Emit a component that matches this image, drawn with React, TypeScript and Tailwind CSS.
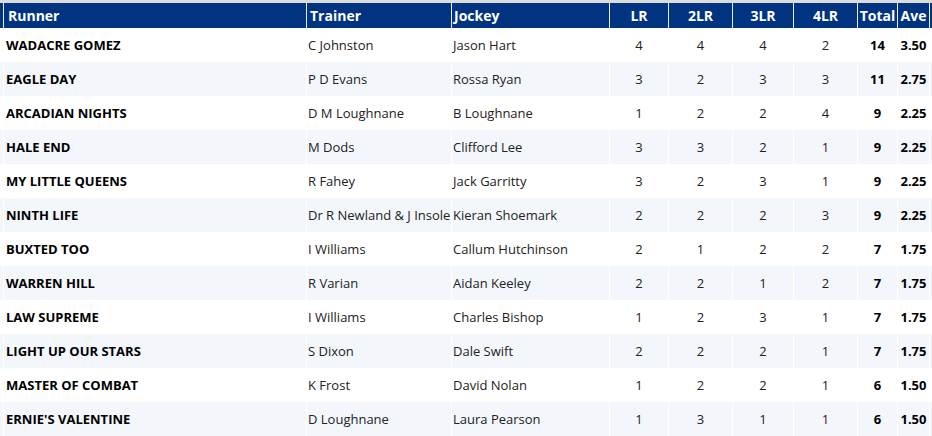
import React from "react";

type Row = { runner: string; trainer: string; jockey: string; lr: number; l2: number; l3: number; l4: number; total: number; ave: string };

const rows: Row[] = [
  { runner: "WADACRE GOMEZ", trainer: "C Johnston", jockey: "Jason Hart", lr: 4, l2: 4, l3: 4, l4: 2, total: 14, ave: "3.50" },
  { runner: "EAGLE DAY", trainer: "P D Evans", jockey: "Rossa Ryan", lr: 3, l2: 2, l3: 3, l4: 3, total: 11, ave: "2.75" },
  { runner: "ARCADIAN NIGHTS", trainer: "D M Loughnane", jockey: "B Loughnane", lr: 1, l2: 2, l3: 2, l4: 4, total: 9, ave: "2.25" },
  { runner: "HALE END", trainer: "M Dods", jockey: "Clifford Lee", lr: 3, l2: 3, l3: 2, l4: 1, total: 9, ave: "2.25" },
  { runner: "MY LITTLE QUEENS", trainer: "R Fahey", jockey: "Jack Garritty", lr: 3, l2: 2, l3: 3, l4: 1, total: 9, ave: "2.25" },
  { runner: "NINTH LIFE", trainer: "Dr R Newland & J Insole", jockey: "Kieran Shoemark", lr: 2, l2: 2, l3: 2, l4: 3, total: 9, ave: "2.25" },
  { runner: "BUXTED TOO", trainer: "I Williams", jockey: "Callum Hutchinson", lr: 2, l2: 1, l3: 2, l4: 2, total: 7, ave: "1.75" },
  { runner: "WARREN HILL", trainer: "R Varian", jockey: "Aidan Keeley", lr: 2, l2: 2, l3: 1, l4: 2, total: 7, ave: "1.75" },
  { runner: "LAW SUPREME", trainer: "I Williams", jockey: "Charles Bishop", lr: 1, l2: 2, l3: 3, l4: 1, total: 7, ave: "1.75" },
  { runner: "LIGHT UP OUR STARS", trainer: "S Dixon", jockey: "Dale Swift", lr: 2, l2: 2, l3: 2, l4: 1, total: 7, ave: "1.75" },
  { runner: "MASTER OF COMBAT", trainer: "K Frost", jockey: "David Nolan", lr: 1, l2: 2, l3: 2, l4: 1, total: 6, ave: "1.50" },
  { runner: "ERNIE'S VALENTINE", trainer: "D Loughnane", jockey: "Laura Pearson", lr: 1, l2: 3, l3: 1, l4: 1, total: 6, ave: "1.50" },
];

const cols = "grid grid-cols-[3px_302px_144px_157px_58px_63px_60px_63px_39px_31px_10px] gap-x-px";

export default function App() {
  return (
    <div className="w-[932px] h-[436px] overflow-hidden bg-white" style={{ fontFamily: '"Open Sans", sans-serif' }}>
      <div className="h-[3px] bg-[#dcdcdc]" />
      <div className={`${cols} h-[25px] bg-[#e8ecf2] text-[14px] font-bold text-white leading-[25px]`}>
        <div className="bg-[#003380]" />
        <div className="bg-[#003380] pl-[4px]">Runner</div>
        <div className="bg-[#003380] pl-[3px]">Trainer</div>
        <div className="bg-[#003380] pl-[2px]">Jockey</div>
        <div className="bg-[#003380] text-center">LR</div>
        <div className="bg-[#003380] text-center">2LR</div>
        <div className="bg-[#003380] text-center">3LR</div>
        <div className="bg-[#003380] text-center">4LR</div>
        <div className="bg-[#003380] text-center">Total</div>
        <div className="bg-[#003380] text-center">Ave</div>
        <div className="bg-[#003380]" />
      </div>
      {rows.map((r, i) => {
        const bg = i % 2 === 0 ? "bg-white" : "bg-[#f3f7fc]";
        return (
          <div key={i} className={`${cols} h-[34px] bg-white text-[13px] leading-[34px] text-[#222]`}>
            <div className={bg} />
            <div className={`${bg} pl-[2px] font-bold text-black whitespace-nowrap`}>{r.runner}</div>
            <div className={`${bg} pl-[1px] whitespace-nowrap overflow-visible`}>{r.trainer}</div>
            <div className={`${bg} pl-[1px] whitespace-nowrap`}>{r.jockey}</div>
            <div className={`${bg} text-center`}>{r.lr}</div>
            <div className={`${bg} text-center`}>{r.l2}</div>
            <div className={`${bg} text-center`}>{r.l3}</div>
            <div className={`${bg} text-center`}>{r.l4}</div>
            <div className={`${bg} text-center font-bold text-black`}>{r.total}</div>
            <div className={`${bg} text-center font-bold text-black`}>{r.ave}</div>
            <div className={bg} />
          </div>
        );
      })}
    </div>
  );
}
